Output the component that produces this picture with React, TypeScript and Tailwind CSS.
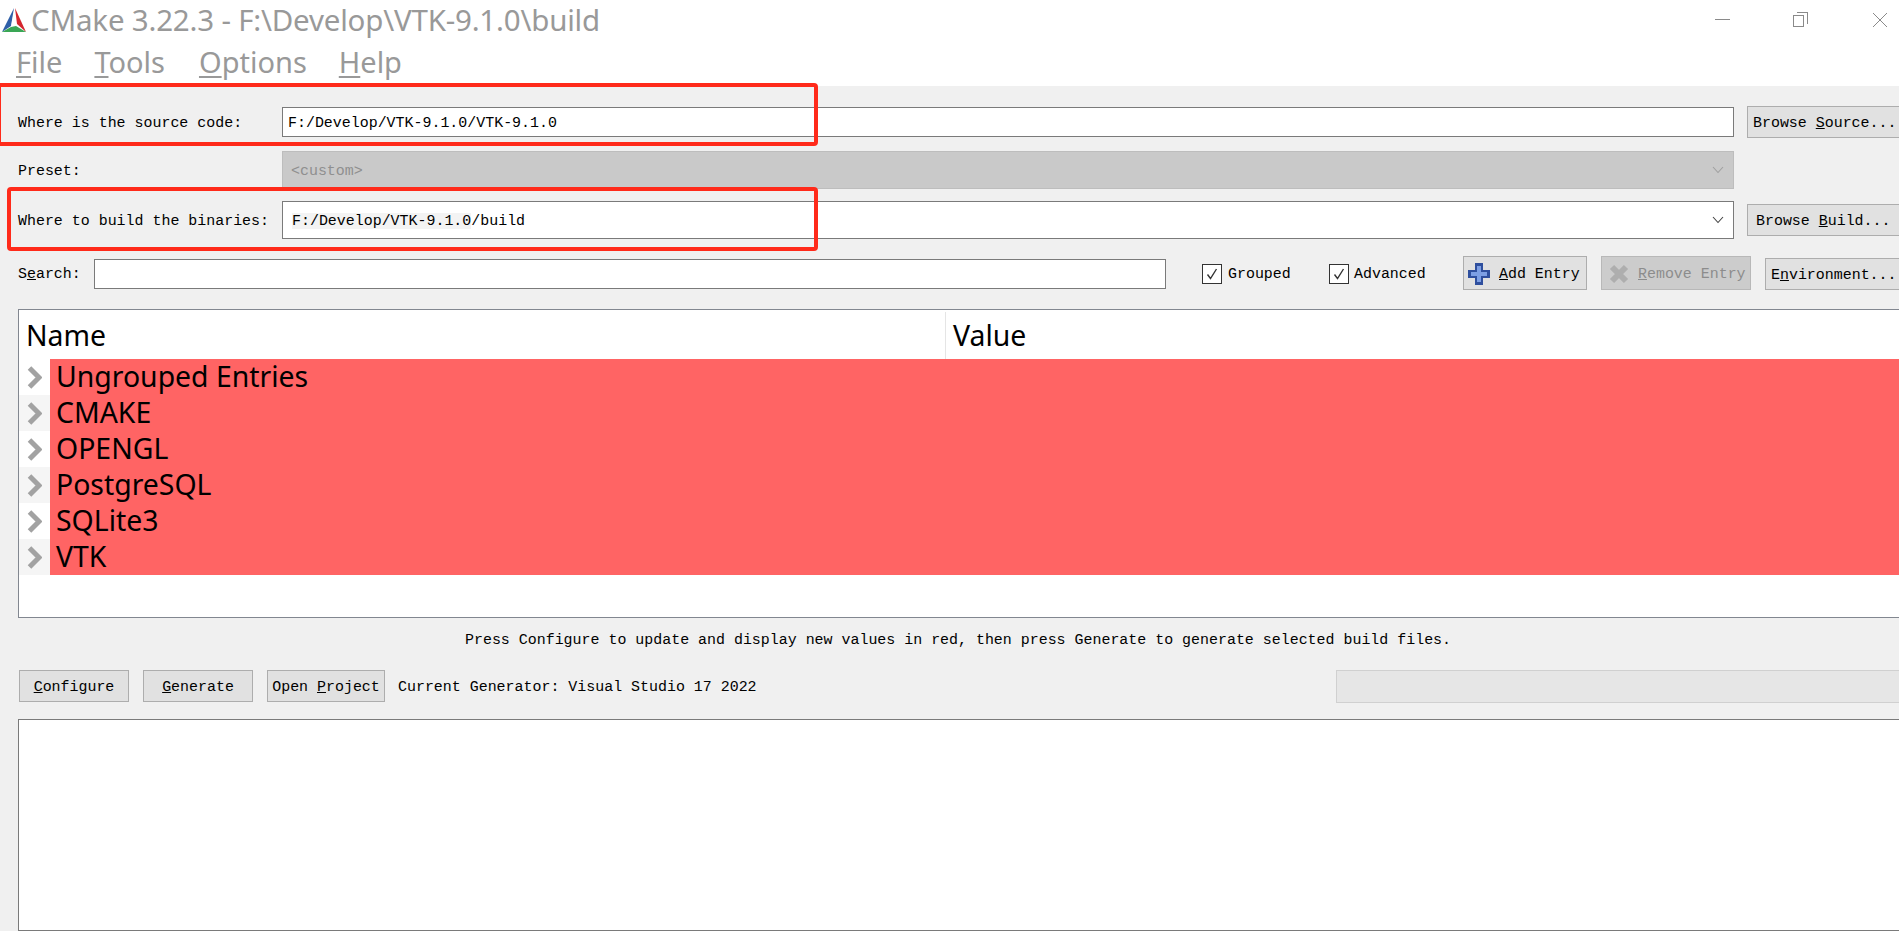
import React from "react";

const mono = "font-['Liberation_Mono',monospace] text-[14.95px] pt-[2px] leading-none text-black whitespace-pre";
const ui = "font-['Noto_Sans',sans-serif]";

function Btn({ children, cls }: { children: React.ReactNode; cls: string }) {
  return (
    <div className={`flex shrink-0 items-center border border-[#adadad] bg-[#e1e1e1] ${mono} ${cls}`}>{children}</div>
  );
}

function Chev({ color }: { color: string }) {
  return (
    <svg width="12" height="8" viewBox="0 0 12 8" className="shrink-0">
      <path d="M1 1 L6 6.5 L11 1" fill="none" stroke={color} strokeWidth="1.1" />
    </svg>
  );
}

function Arrow() {
  return (
    <svg width="15" height="23" viewBox="0 0 15 23">
      <path d="M2.5 2 L12 11.5 L2.5 21" fill="none" stroke="#a2a2a2" strokeWidth="5" />
    </svg>
  );
}

function Check() {
  return (
    <div className="flex h-5 w-5 shrink-0 items-center justify-center border border-[#333] bg-white">
      <svg width="14" height="14" viewBox="0 0 14 14">
        <path d="M2.5 7.5 L5.5 11.5 L11.5 2" fill="none" stroke="#333" strokeWidth="1.4" />
      </svg>
    </div>
  );
}

function Logo() {
  return (
    <svg width="26" height="26" viewBox="0 0 26 26" className="shrink-0">
      <path d="M13 1 L1 25 L10 19 Z" fill="#2f5fa8" />
      <path d="M14 1 L25 25 L16 17 Z" fill="#d4262e" />
      <path d="M1 25 L25 25 L15 19 L10 20 Z" fill="#3aa655" />
      <path d="M13 4 L10 19 L15 18 Z" fill="#ffffff" opacity="0.55" />
    </svg>
  );
}

const rows = ["Ungrouped Entries", "CMAKE", "OPENGL", "PostgreSQL", "SQLite3", "VTK"];

export default function App() {
  return (
    <div className="relative flex h-[931px] w-[1899px] flex-col overflow-hidden bg-[#f0f0f0]">
      {/* title bar */}
      <div className="flex h-[43px] shrink-0 items-center bg-white pb-[4px] pl-[1px]">
        <Logo />
        <span className={`${ui} ml-[4px] text-[29.5px] leading-none tracking-[-0.2px] text-[#999999] whitespace-pre`}>
          CMake 3.22.3 - F:\Develop\VTK-9.1.0\build
        </span>
        <div className="ml-auto flex items-center">
          <div className="h-[1px] w-[15px] bg-[#8a8a8a]" />
          <div className="relative ml-[63px] h-[15px] w-[15px]">
            <div className="absolute bottom-0 left-0 h-[12px] w-[11px] border border-[#8a8a8a] bg-white" />
            <div className="absolute right-0 top-0 h-[12px] w-[11px] border-r border-t border-[#8a8a8a]" />
          </div>
          <svg width="16" height="16" viewBox="0 0 16 16" className="ml-[64px] mr-[11px]">
            <path d="M1 1 L15 15 M15 1 L1 15" stroke="#8a8a8a" strokeWidth="1" />
          </svg>
        </div>
      </div>
      {/* menu bar */}
      <div className={`${ui} flex h-[43px] shrink-0 items-start bg-white text-[29px] leading-[38px] text-[#999999]`}>
        <span className="ml-[16px]"><u className="underline-offset-[3px]">F</u>ile</span>
        <span className="ml-[32px]"><u className="underline-offset-[3px]">T</u>ools</span>
        <span className="ml-[34px]"><u className="underline-offset-[3px]">O</u>ptions</span>
        <span className="ml-[32px]"><u className="underline-offset-[3px]">H</u>elp</span>
      </div>

      {/* source */}
      <div className="mt-[20px] flex h-[32px] shrink-0 items-center pl-[18px]">
        <span className={`${mono} w-[264px] shrink-0`}>Where is the source code:</span>
        <div className={`${mono} flex h-[30px] w-[1452px] shrink-0 items-center border border-[#7a7a7a] bg-white pl-[5px]`}>F:/Develop/VTK-9.1.0/VTK-9.1.0</div>
        <Btn cls="ml-[13px] h-[32px] w-[160px] pl-[5px]">Browse <u>S</u>ource...</Btn>
      </div>

      {/* preset */}
      <div className="mt-[13px] flex h-[38px] shrink-0 items-center pl-[18px]">
        <span className={`${mono} w-[264px] shrink-0`}>Preset:</span>
        <div className="flex h-[38px] w-[1452px] shrink-0 items-center justify-between border border-[#bdbdbd] bg-[#c9c9c9] pl-[8px] pr-[9px]">
          <span className={`${mono} !text-[#8f8f8f]`}>&lt;custom&gt;</span>
          <Chev color="#a0a0a0" />
        </div>
      </div>

      {/* build */}
      <div className="mt-[12px] flex h-[38px] shrink-0 items-center pl-[18px]">
        <span className={`${mono} w-[264px] shrink-0`}>Where to build the binaries:</span>
        <div className="flex h-[38px] w-[1452px] shrink-0 items-center justify-between border border-[#7a7a7a] bg-white pl-[9px] pr-[9px]">
          <span className={mono}><span className="bg-[#f3f3f3]">F:/Develop/VTK-9.1.0</span>/build</span>
          <Chev color="#444444" />
        </div>
        <Btn cls="ml-[13px] h-[32px] w-[160px] pl-[8px]">Browse <u>B</u>uild...</Btn>
      </div>

      {/* search */}
      <div className="mt-[17px] flex h-[34px] shrink-0 items-center pl-[18px]">
        <span className={`${mono} w-[76px] shrink-0`}>S<u>e</u>arch:</span>
        <div className="mt-[2px] h-[30px] w-[1072px] shrink-0 border border-[#7a7a7a] bg-white" />
        <div className="ml-[36px] mt-[1px]"><Check /></div>
        <span className={`${mono} ml-[6px] w-[101px] shrink-0`}>Grouped</span>
        <div className="mt-[1px]"><Check /></div>
        <span className={`${mono} ml-[5px] w-[109px] shrink-0`}>Advanced</span>
        <Btn cls="h-[34px] w-[124px] pl-[4px]">
          <svg width="22" height="22" viewBox="0 0 22 22" className="mr-[9px] shrink-0">
            <path d="M7 0 H15 V7 H22 V15 H15 V22 H7 V15 H0 V7 H7 Z" fill="#2f4f9e" />
            <path d="M9 3 H13 V9 H19 V13 H13 V19 H9 V13 H3 V9 H9 Z" fill="#7d9fe4" />
          </svg>
          <span><u>A</u>dd Entry</span>
        </Btn>
        <Btn cls="ml-[14px] h-[34px] w-[150px] !border-[#b8b8b8] !bg-[#cccccc] !text-[#8c8c8c] pl-[6px]">
          <svg width="20" height="20" viewBox="0 0 20 20" className="mr-[9px] ml-[1px] shrink-0">
            <path d="M3 3 L17 17 M17 3 L3 17" stroke="#aeaeae" strokeWidth="6" />
          </svg>
          <span><u>R</u>emove Entry</span>
        </Btn>
        <Btn cls="ml-[14px] h-[32px] w-[160px] self-end pl-[5px]">E<u>n</u>vironment...</Btn>
      </div>

      {/* tree */}
      <div className="ml-[18px] mt-[19px] h-[309px] w-[1900px] shrink-0 border border-[#828790] bg-white">
        <div className={`${ui} flex h-[49px] items-center pt-[2px] text-[28.4px] leading-none text-black`}>
          <div className="flex h-full w-[927px] shrink-0 items-center border-r border-[#e5e5e5] pl-[7px]">Name</div>
          <div className="pl-[7px]">Value</div>
        </div>
        {rows.map((r, i) => (
          <div key={r} className={`flex h-[36px] ${i % 2 ? "bg-[#f5f5f5]" : "bg-white"}`}>
            <div className="flex w-[31px] shrink-0 items-center pl-[8px]"><Arrow /></div>
            <div className={`${ui} flex flex-1 items-center bg-[#ff6464] pb-[1px] pl-[6px] text-[28.4px] leading-none text-black`}>{r}</div>
          </div>
        ))}
      </div>

      {/* status */}
      <div className="flex h-[42px] shrink-0 items-center pl-[465px]">
        <span className={mono}>Press Configure to update and display new values in red, then press Generate to generate selected build files.</span>
      </div>

      {/* actions */}
      <div className="mt-[10px] flex h-[33px] shrink-0 items-start pl-[19px]">
        <Btn cls="h-[32px] w-[110px] justify-center"><span><u>C</u>onfigure</span></Btn>
        <Btn cls="ml-[14px] h-[32px] w-[110px] justify-center"><span><u>G</u>enerate</span></Btn>
        <Btn cls="ml-[14px] h-[32px] w-[118px] justify-center"><span>Open <u>P</u>roject</span></Btn>
        <span className={`${mono} ml-[13px] mt-[8px] w-[938px] shrink-0`}>Current Generator: Visual Studio 17 2022</span>
        <div className="h-[33px] w-[580px] shrink-0 border border-[#d0d0d0] bg-[#e6e6e6]" />
      </div>

      {/* output */}
      <div className="ml-[18px] mt-[16px] w-[1900px] flex-1 border border-[#7a7a7a] bg-white" />

      {/* annotation rectangles */}
      <div className="absolute left-[-3px] top-[83px] h-[63px] w-[821px] rounded-[4px] border-[4px] border-[#ff2a1a]" />
      <div className="absolute left-[7px] top-[187px] h-[64px] w-[811px] rounded-[4px] border-[4px] border-[#ff2a1a]" />
    </div>
  );
}
